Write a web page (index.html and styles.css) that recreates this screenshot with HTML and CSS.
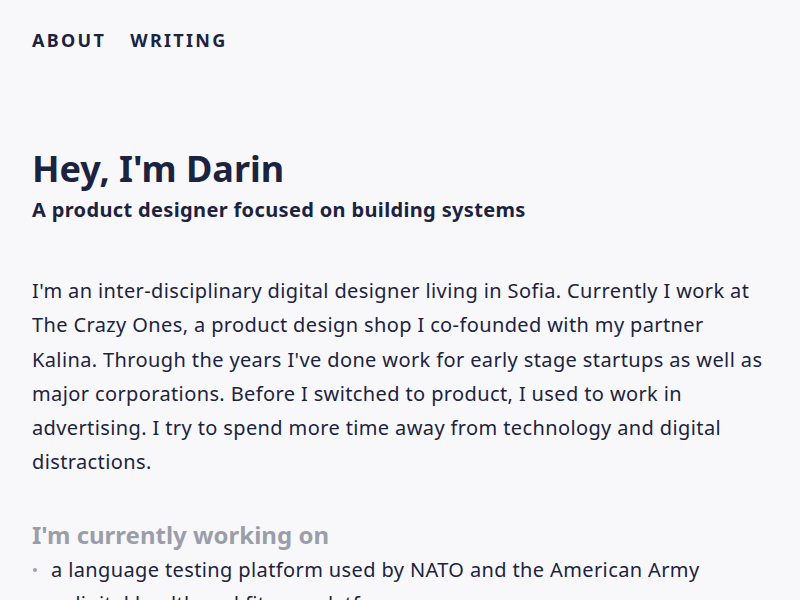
FILE: index.html
```html
<!DOCTYPE html>
<html lang="en">
<head>
    <meta charset="UTF-8">
    <meta name="viewport" content="width=device-width, initial-scale=1.0">
    <title>Darin</title>
    <link rel="stylesheet" href="styles.css">
</head>
<body>
    <nav class="nav">
        <a href="#about">About</a>
        <a href="#writing">Writing</a>
    </nav>

    <header class="intro">
        <h1>Hey, I'm Darin</h1>
        <p class="tagline">A product designer focused on building systems</p>
    </header>

    <p class="bio">I'm an inter-disciplinary digital designer living in Sofia. Currently I work at The Crazy Ones, a product design shop I co-founded with my partner Kalina. Through the years I've done work for early stage startups as well as major corporations. Before I switched to product, I used to work in advertising. I try to spend more time away from technology and digital distractions.</p>

    <h2>I'm currently working on</h2>
    <ul class="projects">
        <li>a language testing platform used by NATO and the American Army</li>
        <li>a digital health and fitness platform</li>
    </ul>
</body>
</html>
```

FILE: styles.css
```css
body {
    margin: 0;
    padding: 0 32px;
    background-color: #f8f8fb;
    color: #1c2340;
    font-family: "Noto Sans", "Open Sans", sans-serif;
}
.nav {
    display: flex;
    gap: 24px;
    padding-top: 28px;
}
.nav a {
    color: #1c2340;
    text-decoration: none;
    text-transform: uppercase;
    font-weight: 700;
    font-size: 18px;
    line-height: 24px;
    letter-spacing: 2.3px;
}
h1 {
    margin: 95px 0 0;
    font-size: 36px;
    line-height: 44px;
    font-weight: 700;
}
.tagline {
    margin: 5px 0 0;
    font-size: 20px;
    line-height: 28px;
    font-weight: 700;
    letter-spacing: 0.35px;
}
.bio {
    margin: 50px 0 0;
    font-size: 20px;
    line-height: 34.3px;
    letter-spacing: 0.38px;
}
h2 {
    margin: 39px 0 0;
    font-size: 24px;
    line-height: 32px;
    font-weight: 700;
    color: #9b9ea9;
}
.projects {
    list-style: none;
    margin: 2px 0 0;
    padding: 0;
}
.projects li {
    display: flex;
    align-items: center;
    gap: 14px;
    font-size: 20px;
    line-height: 34px;
    letter-spacing: 0.38px;
}
.projects li::before {
    content: "";
    width: 4px;
    height: 4px;
    margin-left: 1px;
    border-radius: 50%;
    background-color: #a0a3ae;
}
```
